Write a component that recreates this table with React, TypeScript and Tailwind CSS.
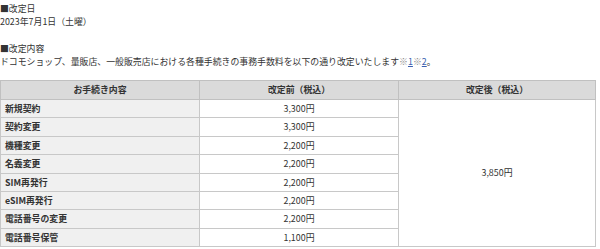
import React from 'react';

const rows = [
  { label: '新規契約', before: '3,300円' },
  { label: '契約変更', before: '3,300円' },
  { label: '機種変更', before: '2,200円' },
  { label: '名義変更', before: '2,200円' },
  { label: 'SIM再発行', before: '2,200円' },
  { label: 'eSIM再発行', before: '2,200円' },
  { label: '電話番号の変更', before: '2,200円' },
  { label: '電話番号保管', before: '1,100円' },
];

const App: React.FC = () => {
  return (
    <div
      className="w-[600px] h-[249px] bg-white text-[#333] text-[8.9px] leading-[13.4px] overflow-hidden"
      style={{ fontFamily: '"Noto Sans CJK JP", "Noto Sans", sans-serif' }}
    >
      <div className="pt-[1.5px]">
        <p>■改定日</p>
        <p>2023年7月1日（土曜）</p>
        <p className="mt-[13.4px]">■改定内容</p>
        <p>
          ドコモショップ、量販店、一般販売店における各種手続きの事務手数料を以下の通り改定いたします
          <span className="text-[#888]">※</span>
          <span className="text-[#3b5fb0] underline">1</span>
          <span className="text-[#888]">※</span>
          <span className="text-[#3b5fb0] underline">2</span>。
        </p>
      </div>

      <table className="mt-[11.5px] w-[596px] border-collapse border border-[#c8c8c8] table-fixed">
        <thead>
          <tr className="h-[19px] bg-[#dadada]">
            <th className="w-[199px] border border-[#c0c0c0] font-bold text-center">お手続き内容</th>
            <th className="w-[199px] border border-[#c0c0c0] font-bold text-center">改定前（税込）</th>
            <th className="border border-[#c0c0c0] font-bold text-center">改定後（税込）</th>
          </tr>
        </thead>
        <tbody>
          {rows.map((r, i) => (
            <tr key={r.label} className="h-[18.4px]">
              <td className="border border-[#c8c8c8] bg-[#f0f0f0] font-bold pl-[4px]">{r.label}</td>
              <td className="border border-[#c8c8c8] text-center">{r.before}</td>
              {i === 0 && (
                <td rowSpan={8} className="border border-[#c8c8c8] text-center align-middle">
                  3,850円
                </td>
              )}
            </tr>
          ))}
        </tbody>
      </table>
    </div>
  );
};

export default App;
